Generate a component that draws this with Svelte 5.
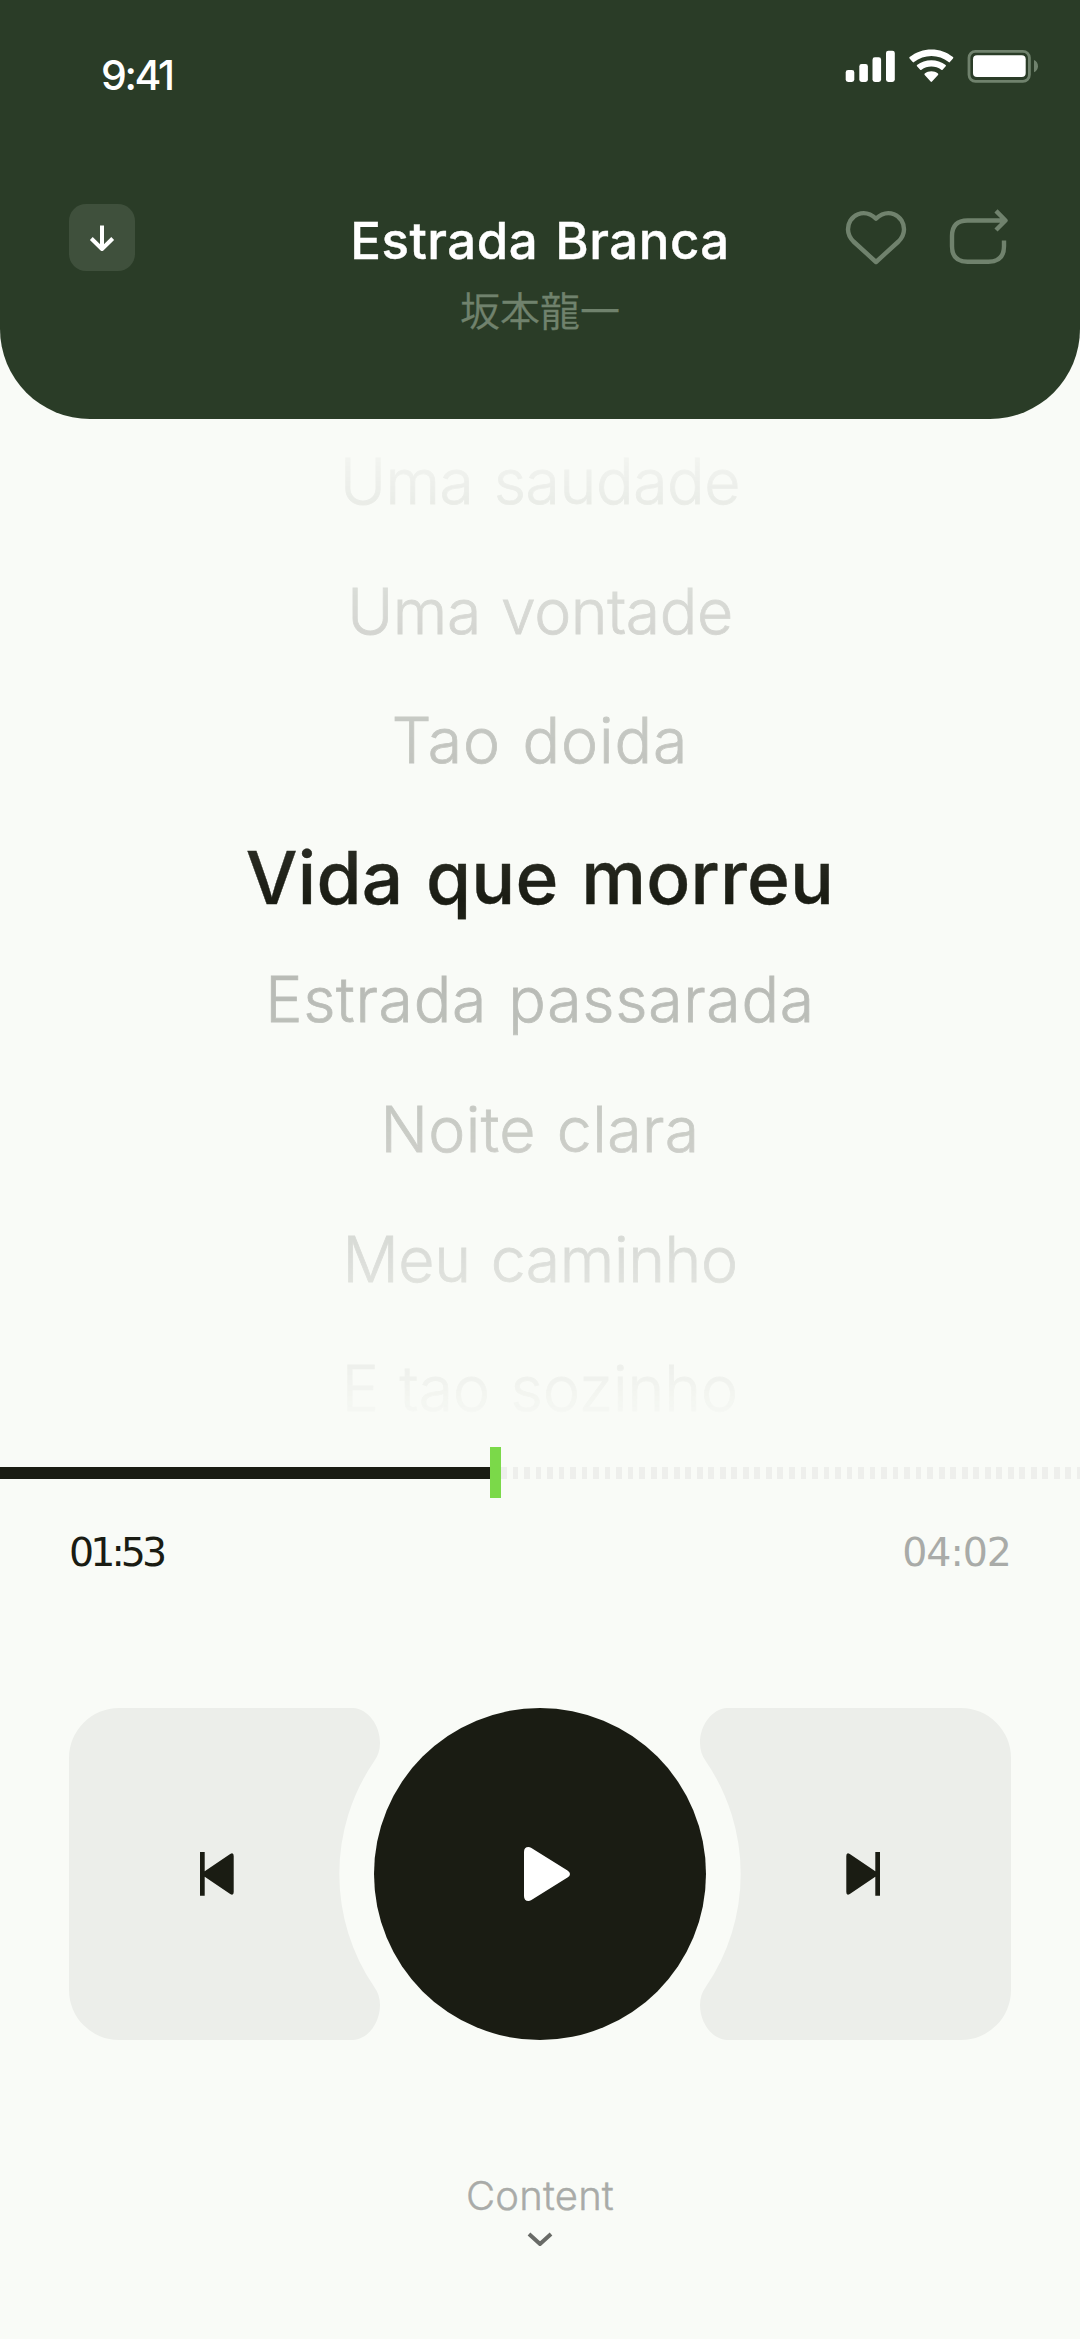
<script>
  const track = {
    title: 'Estrada Branca',
    artist: '坂本龍一',
    elapsed: '01:53',
    duration: '04:02',
    progress: 45.85,
  };

  const lyrics = [
    { text: 'Uma saudade', tracking: -0.4 },
    { text: 'Uma vontade', tracking: -0.4 },
    { text: 'Tao doida', tracking: 0.9 },
    { text: 'Vida que morreu', tracking: 0.2 },
    { text: 'Estrada passarada', tracking: 0.7 },
    { text: 'Noite clara', tracking: 0.4 },
    { text: 'Meu caminho', tracking: -0.4 },
    { text: 'E tao sozinho', tracking: 0 },
  ];

  let current = 3;
</script>

<main>
  <header>
    <div class="status">
      <span class="clock">9:41</span>
      <svg width="194" height="34" viewBox="0 0 194 34">
        <g fill="#fff">
          <rect x="0.7" y="21" width="8.6" height="12" rx="2.4" />
          <rect x="14.3" y="15" width="8.6" height="18" rx="2.4" />
          <rect x="27.5" y="8.3" width="8.6" height="24.7" rx="2.4" />
          <rect x="41" y="1.7" width="8.8" height="31.3" rx="2.4" />
          <path d="M64.6 9.4a1 1 0 0 1 0-1.3C77-2.2 96-2.2 108 8.1a1 1 0 0 1 0 1.3l-3.1 3.7a1 1 0 0 1-1.3 0C94 5 79 5 69 13.1a1 1 0 0 1-1.3 0z" />
          <path d="M72 17.2a1 1 0 0 1 0-1.3C80 9.6 92.600 9.600 100.700 15.900a1 1 0 0 1 0 1.300l-3.100 3.600a1 1 0 0 1-1.300 0C90.500 16.500 82.200 16.500 76.500 20.800a1 1 0 0 1-1.300 0z" />
          <path d="M79.700 26a1 1 0 0 1 0-1.400c3.800-3.200 9.500-3.200 13.300 0a1 1 0 0 1 0 1.400l-6 6.600a1 1 0 0 1-1.400 0z" />
          <rect x="128" y="6.300" width="52.700" height="21.700" rx="4" />
        </g>
        <rect x="124" y="2.300" width="60.400" height="30" rx="6.500" fill="none" stroke="#70826d" stroke-width="2.800" />
        <path d="M189 11c5.300 2.300 5.300 10 0 12.300z" fill="#70826d" />
      </svg>
    </div>

    <div class="bar">
      <button class="download" aria-label="Download">
        <svg width="30" height="30" viewBox="0 0 30 30">
          <path d="M15 2.500V26M4.300 15.500 15 26l10.700-10.500" />
        </svg>
      </button>
      <div class="heading">
        <h1>{track.title}</h1>
        <p>{track.artist}</p>
      </div>
      <div class="actions">
        <svg width="62" height="56" viewBox="0 0 62 56">
          <path d="M31 9.700C25.500 4.500 19 3 13 5.200 6 7.800 2.900 14.500 3 20.500c.1 5 2 8.500 5.500 12L31 53l22.500-20.500c3.500-3.500 5.400-7 5.500-12 .1-6-3.100-12.700-10-15.300C43 3 36.500 4.500 31 9.700Z" />
        </svg>
        <svg width="60" height="56" viewBox="0 0 60 56">
          <path d="M56 11.500H18.500Q3 11.500 3 27v10.200Q3 52.700 18.500 52.700h21Q55 52.700 55 37.200V31.500M47 1.900 56.500 11.500 47 21" />
        </svg>
      </div>
    </div>
  </header>

  <ol class="lyrics">
    {#each lyrics as line, i}
      <li class:active={i === current} style="letter-spacing: {line.tracking}px">{line.text}</li>
    {/each}
  </ol>

  <div class="progress">
    <div class="played" style="width: {track.progress}%"></div>
    <div class="remaining"></div>
  </div>
  <div class="times">
    <span class="elapsed">{track.elapsed}</span>
    <span class="duration">{track.duration}</span>
  </div>

  <div class="controls">
    <button class="skip prev" aria-label="Previous">
      <svg width="311" height="332" viewBox="0 0 311 332">
        <path class="shape" d="M50 0H284C299 1 311 17 311 35C311 42 309 48 305.300 53A200 200 0 0 0 305.300 279C309 284 311 290 311 297C311 315 299 331 284 332H50A50 50 0 0 1 0 282V50A50 50 0 0 1 50 0Z" />
        <path class="glyph" d="M131 144h4.700v19.200l25.500-17.300q3.500-1.800 3.500 2v36.200q0 3.800-3.500 2l-25.500-17.300v18.900H131z" />
      </svg>
    </button>
    <button class="play" aria-label="Play">
      <svg width="46" height="56" viewBox="0 0 46 56">
        <path d="M0 6Q0 1 4.500 1 5.700 1 7 1.800L43.500 24.500Q46 26 46 28t-2.500 3.500L7 54.200Q5.700 55 4.500 55 0 55 0 50z" />
      </svg>
    </button>
    <button class="skip next" aria-label="Next">
      <svg width="311" height="332" viewBox="0 0 311 332">
        <path class="shape" d="M50 0H284C299 1 311 17 311 35C311 42 309 48 305.300 53A200 200 0 0 0 305.300 279C309 284 311 290 311 297C311 315 299 331 284 332H50A50 50 0 0 1 0 282V50A50 50 0 0 1 50 0Z" />
        <path class="glyph" d="M131 144h4.700v19.200l25.500-17.300q3.500-1.800 3.500 2v36.200q0 3.800-3.500 2l-25.500-17.300v18.900H131z" />
      </svg>
    </button>
  </div>

  <footer>
    <span>Content</span>
    <svg width="26" height="16" viewBox="0 0 26 16">
      <path d="M2 3 13 13 24 3" />
    </svg>
  </footer>
</main>

<style>
  :global(body) {
    background: #f9fbf7;
  }

  main {
    width: 1080px;
    height: 2339px;
    overflow: hidden;
    background: #f9fbf7;
    color: #1a1c13;
    font-family: Inter, 'Noto Sans CJK JP', sans-serif;
  }

  button {
    padding: 0;
    border: 0;
    background: none;
  }

  svg {
    display: block;
  }

  header {
    box-sizing: border-box;
    height: 419px;
    padding-top: 49px;
    border-radius: 0 0 90px 90px;
    background: #2a3c27;
    color: #fff;
  }

  .status {
    display: flex;
    justify-content: space-between;
    height: 155px;
    padding: 0 41px 0 101px;
  }

  .clock {
    font-size: 41px;
    font-weight: 500;
    line-height: 52px;
    letter-spacing: -2.4px;
  }

  .bar {
    display: grid;
    grid-template-columns: 240px 1fr 240px;
    padding: 0 69px;
  }

  .download {
    display: grid;
    place-items: center;
    width: 66px;
    height: 67px;
    border-radius: 17px;
    background: #3f503c;
  }

  .download path {
    fill: none;
    stroke: #fff;
    stroke-width: 4;
    stroke-linejoin: round;
  }

  .heading {
    display: flex;
    flex-direction: column;
    align-items: center;
    white-space: nowrap;
  }

  h1 {
    margin: 6px 0 0;
    font-size: 51px;
    font-weight: 500;
    line-height: 62px;
    letter-spacing: 0.5px;
    word-spacing: 3px;
    -webkit-text-stroke: 0.4px;
  }

  .heading p {
    margin: 7px 0 0;
    color: #70826d;
    font-family: 'Noto Sans CJK JP', sans-serif;
    font-size: 40px;
    font-weight: 350;
    line-height: 60px;
    -webkit-text-stroke: 0.3px;
  }

  .actions {
    display: flex;
    justify-content: flex-end;
    gap: 42px;
    padding: 5px 2px 0 0;
  }

  .actions path {
    fill: none;
    stroke: #70826d;
    stroke-width: 4.4;
    stroke-linejoin: round;
  }

  .lyrics {
    display: flex;
    flex-direction: column;
    gap: 49.6px;
    margin: 0;
    padding: 22px 0 18px;
    list-style: none;
    text-align: center;
    word-spacing: 3px;
    -webkit-mask-image: linear-gradient(transparent 0, rgb(0 0 0 / 0.5) 192px, rgb(0 0 0 / 0.78) 321px, #000 480px, rgb(0 0 0 / 0.92) 581px, rgb(0 0 0 / 0.7) 710px, rgb(0 0 0 / 0.42) 840px, rgb(0 0 0 / 0.1) 970px, transparent 1010px);
    mask-image: linear-gradient(transparent 0, rgb(0 0 0 / 0.5) 192px, rgb(0 0 0 / 0.78) 321px, #000 480px, rgb(0 0 0 / 0.92) 581px, rgb(0 0 0 / 0.7) 710px, rgb(0 0 0 / 0.42) 840px, rgb(0 0 0 / 0.1) 970px, transparent 1010px);
  }

  .lyrics li {
    box-sizing: border-box;
    height: 80px;
    font-size: 62.5px;
    font-weight: 350;
    line-height: 80px;
    opacity: 0.3;
    -webkit-text-stroke: 0.8px;
  }

  .lyrics .active {
    padding-top: 8px;
    font-size: 73px;
    font-weight: 500;
    opacity: 1;
    -webkit-text-stroke: 0.4px;
  }

  .progress {
    display: flex;
    align-items: center;
    height: 51px;
    margin-top: 0.5px;
  }

  .played {
    display: flex;
    flex: none;
    align-items: center;
    justify-content: flex-end;
    height: 12px;
    margin-top: 2px;
    background: #1a1c13;
  }

  .played::after {
    content: '';
    flex: none;
    width: 11.5px;
    height: 51px;
    margin: -2px -6px 0 0;
    background: #7bd949;
  }

  .remaining {
    flex: 1;
    height: 12px;
    margin: 2px 0 0 6px;
    background: repeating-linear-gradient(90deg, #eeefec 0 5.76px, transparent 5.76px 11.52px);
  }

  .times {
    display: flex;
    justify-content: space-between;
    padding: 29px 69px 0;
    font-family: 'DejaVu Sans', sans-serif;
    font-size: 39.5px;
    line-height: 50px;
  }

  .elapsed {
    letter-spacing: -3.9px;
  }

  .duration {
    color: #a9aba8;
    letter-spacing: -1px;
  }

  .controls {
    display: flex;
    justify-content: space-between;
    margin-top: 131.5px;
    padding: 0 69px;
  }

  .skip {
    width: 311px;
    height: 332px;
  }

  .next {
    transform: scaleX(-1);
  }

  .shape {
    fill: #eceeea;
  }

  .glyph {
    fill: #1a1c13;
  }

  .play {
    display: grid;
    place-items: center;
    flex: none;
    width: 332px;
    height: 332px;
    margin: 0 -6px;
    padding-left: 14px;
    border-radius: 50%;
    background: #1a1c13;
  }

  .play path {
    fill: #fff;
  }

  footer {
    display: flex;
    flex-direction: column;
    align-items: center;
    gap: 9px;
    padding-top: 130px;
  }

  footer span {
    color: #a9aba8;
    font-size: 40px;
    font-weight: 350;
    line-height: 52px;
    letter-spacing: 0.2px;
    -webkit-text-stroke: 0.4px;
  }

  footer path {
    fill: none;
    stroke: #696b67;
    stroke-width: 4;
    stroke-linejoin: round;
  }
</style>
